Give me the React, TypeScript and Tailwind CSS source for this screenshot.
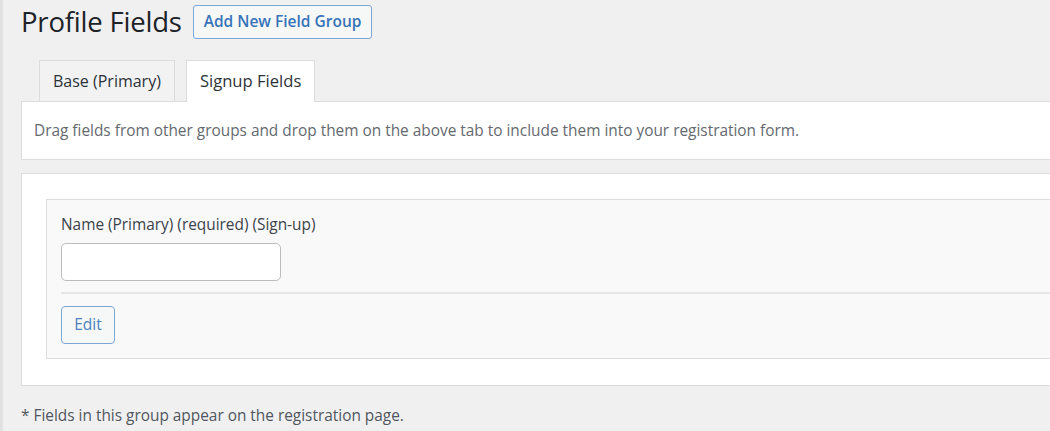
import React from 'react';

const font = { fontFamily: '"Open Sans", "Noto Sans", Arial, sans-serif' };

export default function App() {
  return (
    <div className="min-h-[431px] w-[1050px] overflow-hidden bg-[#f0f0f1] border-l-[3px] border-l-[#e2e2e3] text-[#3c434a]" style={font}>
      <div className="pl-[18px]">
        {/* header */}
        <div className="flex items-center gap-[11px] pt-[3px] h-[41px]">
          <h1 className="text-[27.5px] leading-[34px] font-normal text-[#1d2327] tracking-[-0.2px]">Profile Fields</h1>
          <button className="h-[34px] px-[10px] rounded-[3px] border-[1.5px] border-[#7aa7d6] bg-[#f6f7f7] text-[#3673b8] text-[15.5px] font-semibold">
            Add New Field Group
          </button>
        </div>

        {/* tabs */}
        <div className="flex items-end gap-[11px] pl-[18px] mt-[14px] h-[46px]">
          <div className="h-[41px] px-[13px] flex items-center border border-[#dcdcde] border-b-0 bg-[#f2f2f3] text-[16px] text-[#2c3338]">
            Base (Primary)
          </div>
          <div className="h-[42px] px-[13px] flex items-center border border-[#dcdcde] border-b-0 bg-white text-[16.6px] text-[#2c3338] relative top-[1px]">
            Signup Fields
          </div>
        </div>

        {/* description */}
        <div className="bg-white border border-[#dcdcde] border-r-0 h-[59px] flex items-center pl-[12px]">
          <p className="text-[15.4px] text-[#646970]">
            Drag fields from other groups and drop them on the above tab to include them into your registration form.
          </p>
        </div>

        {/* fields panel */}
        <div className="mt-[13px] bg-white border border-[#dcdcde] border-r-0 h-[213px] pt-[25px] pl-[24px]">
          <div className="bg-[#f9f9f9] border border-[#dcdcde] border-r-0 h-[160px] pl-[14px]">
            <div className="pt-[14px] pb-[11px] border-b-[2px] border-[#e6e6e6]">
              <label className="block text-[15.4px] text-[#3c434a] leading-[22px]">Name (Primary) (required) (Sign-up)</label>
              <input
                type="text"
                className="mt-[7px] block w-[220px] h-[38px] rounded-[5px] border-[1.5px] border-[#bcbcbc] bg-white"
              />
            </div>
            <div className="pt-[12px]">
              <button className="h-[38px] w-[54px] rounded-[4px] border-[1.5px] border-[#7aa7d6] bg-[#f6f7f7] text-[#4a82c0] text-[15.5px]">
                Edit
              </button>
            </div>
          </div>
        </div>

        {/* footer note */}
        <p className="mt-[18px] text-[15.4px] text-[#50575e]">* Fields in this group appear on the registration page.</p>
      </div>
    </div>
  );
}
